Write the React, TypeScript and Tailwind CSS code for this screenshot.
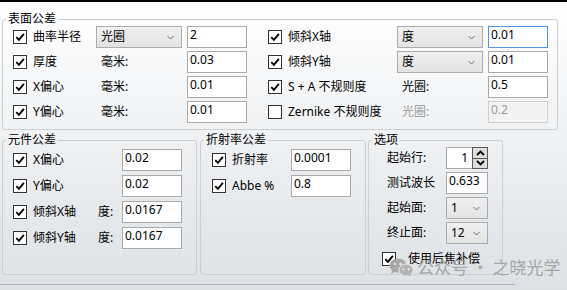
import React from "react";

const Check = ({ checked = true }: { checked?: boolean }) => (
  <span className="w-[14px] h-[14px] border border-[#333333] bg-white flex items-center justify-center shrink-0">
    {checked && (
      <svg width="10" height="10" viewBox="0 0 10 10">
        <path d="M1.3 5.2 L3.9 7.9 L8.9 1.9" stroke="#000" strokeWidth="1.9" fill="none" />
      </svg>
    )}
  </span>
);

const Chevron = () => (
  <svg width="7" height="5" viewBox="0 0 7 5" className="shrink-0">
    <path d="M0.5 1 L3.5 4 L6.5 1" stroke="#707070" strokeWidth="1" fill="none" />
  </svg>
);

const Dropdown = ({ text, w }: { text: string; w: string }) => (
  <div
    className={`${w} h-[22px] border border-[#acacac] bg-gradient-to-b from-[#f0f0f0] to-[#e3e3e3] flex items-center justify-between pl-[4px] pr-[7px] shrink-0`}
  >
    <span>{text}</span>
    <Chevron />
  </div>
);

const Field = ({
  value,
  w = "w-[60px]",
  focused = false,
  disabled = false,
}: {
  value: string;
  w?: string;
  focused?: boolean;
  disabled?: boolean;
}) => (
  <div
    className={`${w} h-[22px] border shrink-0 px-[2px] leading-[16px] ${
      focused
        ? "border-[#4f94dc] bg-white text-black"
        : disabled
        ? "border-[#cfcfcf] bg-[#f3f3f3] text-[#9a9a9a]"
        : "border-[#a9a9a9] bg-white text-black"
    }`}
  >
    {value}
  </div>
);

const CheckLabel = ({ label, checked = true, w }: { label: string; checked?: boolean; w: string }) => (
  <div className={`${w} flex items-center shrink-0`}>
    <Check checked={checked} />
    <span className="ml-[6px] whitespace-nowrap">{label}</span>
  </div>
);

const Legend = ({ text }: { text: string }) => (
  <legend className="ml-[3px] px-[2px] leading-[14px] text-black">{text}</legend>
);

const SpinArrow = ({ up }: { up: boolean }) => (
  <svg width="9" height="6" viewBox="0 0 9 6">
    <path d={up ? "M1 5 L4.5 1.5 L8 5" : "M1 1 L4.5 4.5 L8 1"} stroke="#000" strokeWidth="1.8" fill="none" />
  </svg>
);

const WeChat = () => (
  <svg width="25" height="19" viewBox="0 0 25 19">
    <ellipse cx="9" cy="7.5" rx="8.5" ry="7" fill="#a3a3a3" />
    <path d="M3 12 L2 16 L6.5 13.5 Z" fill="#a3a3a3" />
    <circle cx="6" cy="6" r="1.2" fill="#eeeeee" />
    <circle cx="11.5" cy="6" r="1.2" fill="#eeeeee" />
    <ellipse cx="17" cy="12" rx="7.2" ry="6" fill="#b0b0b0" stroke="#e8e8e8" strokeWidth="1" />
    <path d="M21 16 L22.5 18.8 L18.5 17 Z" fill="#b0b0b0" />
    <circle cx="14.5" cy="11" r="1" fill="#eeeeee" />
    <circle cx="19.5" cy="11" r="1" fill="#eeeeee" />
  </svg>
);

export default function App() {
  return (
    <div
      className="relative w-[567px] h-[290px] overflow-hidden border-t-2 border-black bg-gradient-to-b from-[#ffffff] to-[#dde1e5] text-[12px] text-black"
      style={{ fontFamily: '"Noto Sans", "Noto Sans CJK SC", sans-serif' }}
    >
      {/* 表面公差 */}
      <fieldset className="ml-[2px] mt-[10px] w-[556px] h-[118px] border border-[#cbd0d5] rounded-[3px] p-0">
        <Legend text="表面公差" />
        <div className="pl-[10px] flex flex-col gap-[3px]">
          <div className="flex items-center h-[22px]">
            <CheckLabel label="曲率半径" w="w-[83px]" />
            <Dropdown text="光圈" w="w-[86px]" />
            <div className="w-[5px] shrink-0" />
            <Field value="2" />
            <div className="w-[21px] shrink-0" />
            <CheckLabel label="倾斜X轴" w="w-[129px]" />
            <Dropdown text="度" w="w-[86px]" />
            <div className="w-[5px] shrink-0" />
            <Field value="0.01" focused />
          </div>
          <div className="flex items-center h-[22px]">
            <CheckLabel label="厚度" w="w-[83px]" />
            <div className="w-[86px] pl-[5px] shrink-0">毫米:</div>
            <div className="w-[5px] shrink-0" />
            <Field value="0.03" />
            <div className="w-[21px] shrink-0" />
            <CheckLabel label="倾斜Y轴" w="w-[129px]" />
            <Dropdown text="度" w="w-[86px]" />
            <div className="w-[5px] shrink-0" />
            <Field value="0.01" />
          </div>
          <div className="flex items-center h-[22px]">
            <CheckLabel label="X偏心" w="w-[83px]" />
            <div className="w-[86px] pl-[5px] shrink-0">毫米:</div>
            <div className="w-[5px] shrink-0" />
            <Field value="0.01" />
            <div className="w-[21px] shrink-0" />
            <CheckLabel label="S + A 不规则度" w="w-[129px]" />
            <div className="w-[86px] pl-[5px] shrink-0">光圈:</div>
            <div className="w-[5px] shrink-0" />
            <Field value="0.5" />
          </div>
          <div className="flex items-center h-[22px]">
            <CheckLabel label="Y偏心" w="w-[83px]" />
            <div className="w-[86px] pl-[5px] shrink-0">毫米:</div>
            <div className="w-[5px] shrink-0" />
            <Field value="0.01" />
            <div className="w-[21px] shrink-0" />
            <CheckLabel label="Zernike 不规则度" checked={false} w="w-[129px]" />
            <div className="w-[86px] pl-[5px] shrink-0 text-[#9a9a9a]">光圈:</div>
            <div className="w-[5px] shrink-0" />
            <Field value="0.2" disabled />
          </div>
        </div>
      </fieldset>

      <div className="flex mt-[3px]">
        {/* 元件公差 */}
        <fieldset className="ml-[2px] w-[195px] h-[142px] border border-[#cbd0d5] rounded-[3px] p-0 shrink-0">
          <Legend text="元件公差" />
          <div className="pl-[10px] pt-[2px] flex flex-col gap-[4px]">
            <div className="flex items-center h-[22px]">
              <CheckLabel label="X偏心" w="w-[85px]" />
              <div className="w-[24px] shrink-0" />
              <Field value="0.02" />
            </div>
            <div className="flex items-center h-[22px]">
              <CheckLabel label="Y偏心" w="w-[85px]" />
              <div className="w-[24px] shrink-0" />
              <Field value="0.02" />
            </div>
            <div className="flex items-center h-[22px]">
              <CheckLabel label="倾斜X轴" w="w-[85px]" />
              <div className="w-[24px] shrink-0">度:</div>
              <Field value="0.0167" />
            </div>
            <div className="flex items-center h-[22px]">
              <CheckLabel label="倾斜Y轴" w="w-[85px]" />
              <div className="w-[24px] shrink-0">度:</div>
              <Field value="0.0167" />
            </div>
          </div>
        </fieldset>

        {/* 折射率公差 */}
        <fieldset className="ml-[3px] w-[166px] h-[142px] border border-[#cbd0d5] rounded-[3px] p-0 shrink-0">
          <Legend text="折射率公差" />
          <div className="pl-[11px] pt-[2px] flex flex-col gap-[4px]">
            <div className="flex items-center h-[22px]">
              <CheckLabel label="折射率" w="w-[79px]" />
              <Field value="0.0001" />
            </div>
            <div className="flex items-center h-[22px]">
              <CheckLabel label="Abbe %" w="w-[79px]" />
              <Field value="0.8" />
            </div>
          </div>
        </fieldset>

        {/* 选项 */}
        <fieldset className="ml-[2px] w-[135px] h-[142px] border border-[#cbd0d5] rounded-[3px] p-0 shrink-0">
          <Legend text="选项" />
          <div className="flex flex-col gap-[3px] pl-[18px]">
            <div className="flex items-center h-[22px]">
              <div className="w-[59px] shrink-0">起始行:</div>
              <div className="w-[42px] h-[22px] flex shrink-0 bg-white border border-[#a9a9a9]">
                <div className="flex-1 text-right pr-[4px] leading-[20px]">1</div>
                <div className="w-[16px] flex flex-col border border-[#5a5a5a] -my-px -mr-px">
                  <div className="flex-1 bg-[#dedede] border-b border-[#5a5a5a] flex items-center justify-center">
                    <SpinArrow up />
                  </div>
                  <div className="flex-1 bg-[#dedede] flex items-center justify-center">
                    <SpinArrow up={false} />
                  </div>
                </div>
              </div>
            </div>
            <div className="flex items-center h-[22px]">
              <div className="w-[59px] shrink-0">测试波长</div>
              <Field value="0.633" w="w-[42px]" />
            </div>
            <div className="flex items-center h-[22px]">
              <div className="w-[59px] shrink-0">起始面:</div>
              <Dropdown text="1" w="w-[42px]" />
            </div>
            <div className="flex items-center h-[22px]">
              <div className="w-[59px] shrink-0">终止面:</div>
              <Dropdown text="12" w="w-[42px]" />
            </div>
            <div className="flex items-center h-[14px] mt-[5px] -ml-[5px]">
              <Check />
              <span className="ml-[12px] whitespace-nowrap">使用后焦补偿</span>
            </div>
          </div>
        </fieldset>
      </div>

      <div className="mt-[9px] w-[515px] h-px bg-[#a6b6c6]" />

      {/* watermark */}
      <div
        className="absolute left-[389px] top-[255px] flex items-center gap-[3px] text-[17px] leading-[20px] text-[#a0a0a0] opacity-90 pointer-events-none"
        style={{ fontFamily: '"Noto Sans CJK SC", sans-serif' }}
      >
        <WeChat />
        <span className="whitespace-nowrap">公众号 · 之晓光学</span>
      </div>
    </div>
  );
}
